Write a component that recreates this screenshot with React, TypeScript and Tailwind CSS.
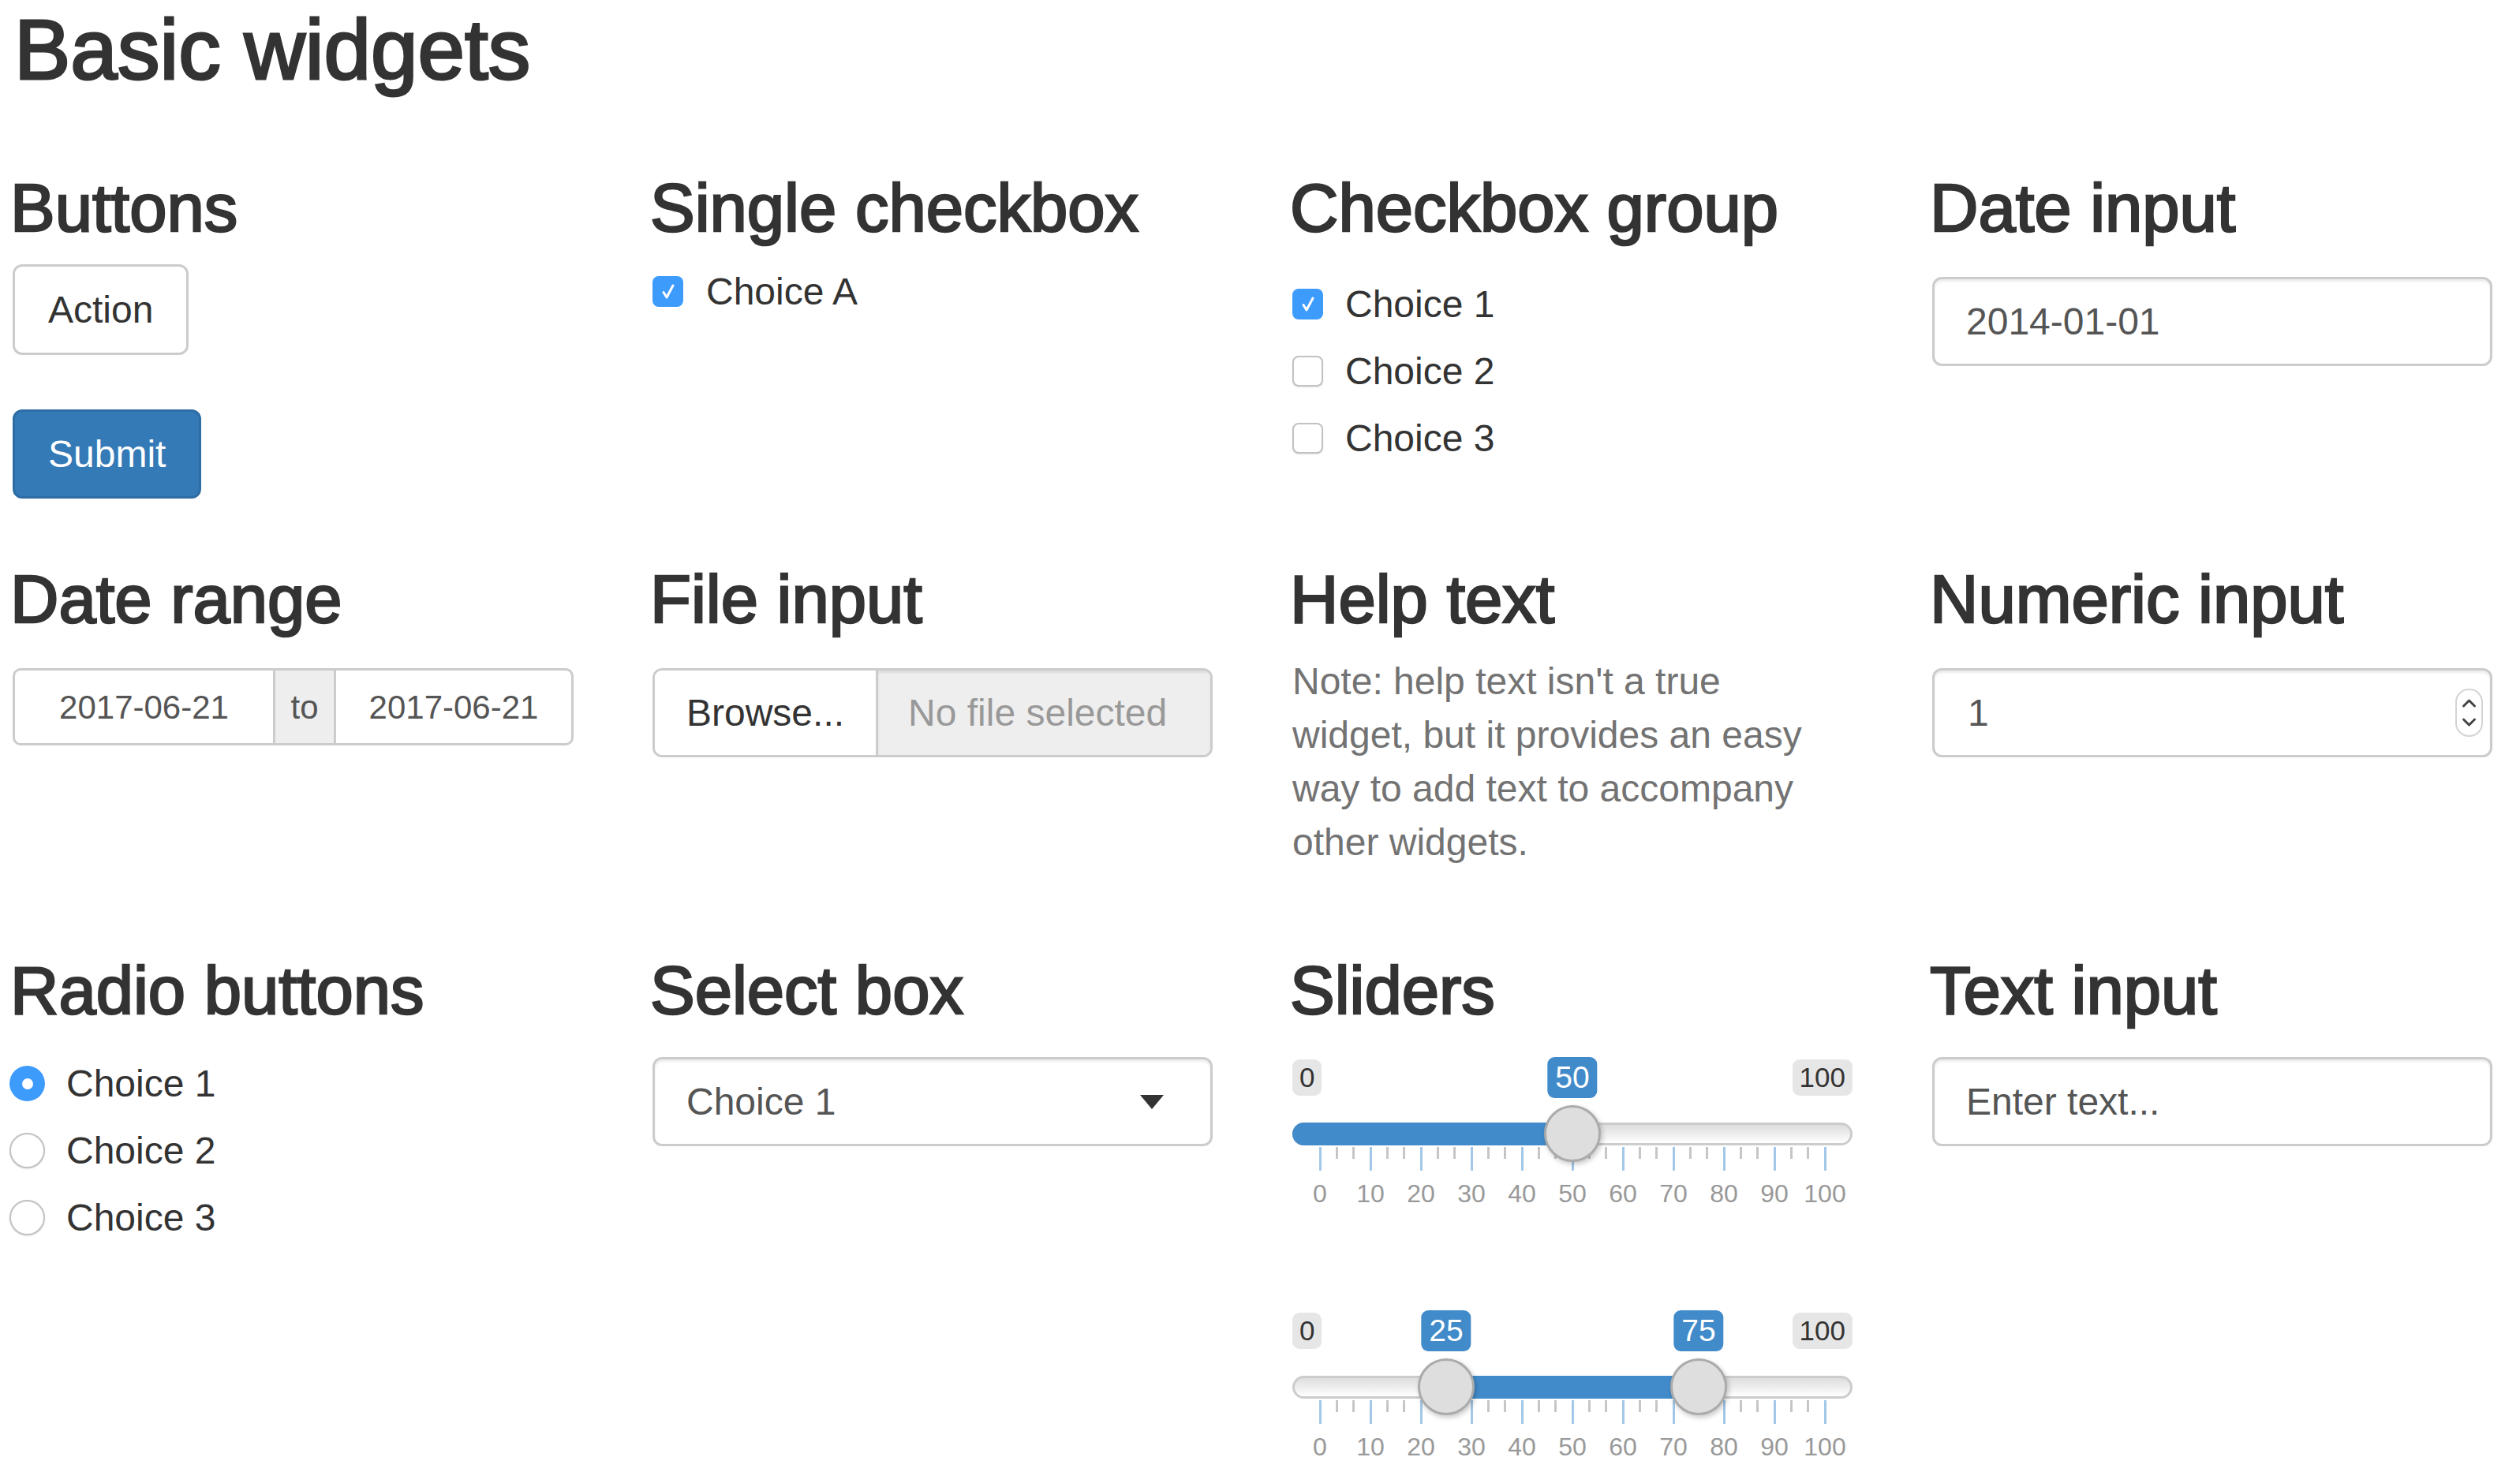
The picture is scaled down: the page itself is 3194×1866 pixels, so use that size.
import React from "react";

const H3 = ({ children }: { children: React.ReactNode }) => (
  <h3 className="-ml-[3px] mb-[12px] text-[85px] leading-[79px] font-normal text-[#333333] whitespace-nowrap [-webkit-text-stroke:2.5px_#333333]">
    {children}
  </h3>
);

const CheckBox = ({ checked }: { checked: boolean }) =>
  checked ? (
    <div className="w-[39px] h-[39px] shrink-0 rounded-[8px] bg-[#3d9bfc] flex items-center justify-center">
      <svg width="26" height="26" viewBox="0 0 26 26">
        <path d="M7 13.5 L11 20 L19 5" fill="none" stroke="#ffffff" strokeWidth="3" strokeLinecap="round" strokeLinejoin="round" />
      </svg>
    </div>
  ) : (
    <div className="w-[39px] h-[39px] shrink-0 rounded-[8px] bg-white border-[2px] border-[#c2c2c2] shadow-[0_1px_2px_rgba(0,0,0,0.12)]" />
  );

const Radio = ({ checked }: { checked: boolean }) =>
  checked ? (
    <div className="w-[45px] h-[45px] shrink-0 rounded-full bg-[#3d9bfc] flex items-center justify-center">
      <div className="w-[14px] h-[14px] rounded-full bg-white" />
    </div>
  ) : (
    <div className="w-[45px] h-[45px] shrink-0 rounded-full bg-white border-[2px] border-[#c2c2c2] shadow-[0_1px_2px_rgba(0,0,0,0.12)]" />
  );

const X = (v: number) => 35 + 6.4 * v;
const majors = [0, 10, 20, 30, 40, 50, 60, 70, 80, 90, 100];
const minors: number[] = [];
for (let k = 0; k < 10; k++) {
  minors.push(k * 10 + 10 / 3, k * 10 + 20 / 3);
}

function Slider({ values, className }: { values: number[]; className: string }) {
  const single = values.length === 1;
  const from = single ? 0 : X(values[0]);
  const to = single ? X(values[0]) : X(values[1]);
  return (
    <div className={`relative w-[710px] h-[190px] ${className}`}>
      <div className="absolute left-0 top-[3px] h-[46px] px-[9px] rounded-[9px] bg-[#e6e6e6] text-[35px] leading-[46px] text-[#333333]">
        0
      </div>
      <div className="absolute right-0 top-[3px] h-[46px] px-[9px] rounded-[9px] bg-[#e6e6e6] text-[35px] leading-[46px] text-[#333333]">
        100
      </div>
      {values.map((v) => (
        <div
          key={v}
          className="absolute top-0 h-[52px] px-[10px] rounded-[9px] bg-[#428bca] text-white text-[39px] leading-[52px] -translate-x-1/2"
          style={{ left: X(v) }}
        >
          {v}
        </div>
      ))}
      <div className="absolute left-0 right-0 top-[83px] h-[29px] rounded-full border-[3px] border-[#cccccc] bg-linear-to-b from-[#dddddd] to-[#ffffff]" />
      <div
        className={`absolute top-[83px] h-[29px] bg-[#428bca] ${single ? "rounded-l-full" : ""}`}
        style={{ left: from, width: to - from }}
      />
      {majors.map((v) => (
        <div key={"M" + v} className="absolute top-[114px] w-[3px] h-[30px] bg-[#a3c7e8]" style={{ left: X(v) - 1.5 }} />
      ))}
      {minors.map((v) => (
        <div key={"m" + v} className="absolute top-[114px] w-[3px] h-[15px] bg-[#c6c6c6]" style={{ left: X(v) - 1.5 }} />
      ))}
      {majors.map((v) => (
        <div
          key={"t" + v}
          className="absolute top-[156px] text-[32px] leading-[34px] text-[#999999] -translate-x-1/2"
          style={{ left: X(v) }}
        >
          {v}
        </div>
      ))}
      {values.map((v) => (
        <div
          key={"h" + v}
          className="absolute top-[61px] w-[72px] h-[72px] rounded-full bg-[#dedede] border-[3px] border-[#ababab] shadow-[2px_3px_6px_rgba(0,0,0,0.22)]"
          style={{ left: X(v) - 36 }}
        />
      ))}
    </div>
  );
}

const inputBox =
  "h-[113px] w-[710px] rounded-[12px] border-[3px] border-[#cccccc] shadow-[inset_0_3px_3px_rgba(0,0,0,0.075)] flex items-center text-[48px] text-[#555555]";

export default function App() {
  return (
    <div className="w-[3194px] h-[1866px] overflow-hidden bg-white text-[#333333] font-['Liberation_Sans',Arial,Helvetica,sans-serif]">
      <h2 className="pl-[18px] pt-[10px] text-[107px] leading-[107px] font-normal whitespace-nowrap [-webkit-text-stroke:3px_#333333]">
        Basic widgets
      </h2>
      <div className="mt-[107px] pl-[16px] grid grid-cols-[811px_811px_811px_710px] grid-rows-[496px_496px_650px]">
        {/* Row 1 */}
        <div>
          <H3>Buttons</H3>
          <div className="mt-[32px] h-[115px] w-fit px-[42px] rounded-[12px] border-[3px] border-[#cccccc] bg-white flex items-center text-[48px] text-[#333333]">
            Action
          </div>
          <div className="mt-[69px] h-[113px] w-fit px-[42px] rounded-[12px] border-[3px] border-[#2e6da4] bg-[#337ab7] flex items-center text-[48px] text-white">
            Submit
          </div>
        </div>
        <div>
          <H3>Single checkbox</H3>
          <div className="mt-[38px] h-[57px] flex items-center gap-[29px] text-[48px]">
            <CheckBox checked />
            <span>Choice A</span>
          </div>
        </div>
        <div>
          <H3>Checkbox group</H3>
          <div className="mt-[54px] flex flex-col gap-[28px]">
            {["Choice 1", "Choice 2", "Choice 3"].map((c, i) => (
              <div key={c} className="h-[57px] flex items-center gap-[28px] text-[48px]">
                <CheckBox checked={i === 0} />
                <span>{c}</span>
              </div>
            ))}
          </div>
        </div>
        <div>
          <H3>Date input</H3>
          <div className={`${inputBox} mt-[48px] pl-[40px]`}>2014-01-01</div>
        </div>

        {/* Row 2 */}
        <div>
          <H3>Date range</H3>
          <div className="mt-[48px] flex h-[98px] w-[711px] rounded-[10px] border-[3px] border-[#cccccc] overflow-hidden text-[42px] text-[#555555]">
            <div className="w-[327px] flex items-center justify-center">2017-06-21</div>
            <div className="w-[80px] flex items-center justify-center bg-[#eeeeee] border-x-[3px] border-[#cccccc]">to</div>
            <div className="flex-1 flex items-center justify-center">2017-06-21</div>
          </div>
        </div>
        <div>
          <H3>File input</H3>
          <div className="mt-[48px] flex h-[113px] w-[710px] rounded-[12px] border-[3px] border-[#cccccc] overflow-hidden text-[48px]">
            <div className="flex items-center px-[40px] bg-white text-[#333333] border-r-[3px] border-[#cccccc]">Browse...</div>
            <div className="flex-1 flex items-center pl-[38px] bg-[#eeeeee] text-[#999999] shadow-[inset_0_3px_3px_rgba(0,0,0,0.075)]">
              No file selected
            </div>
          </div>
        </div>
        <div>
          <H3>Help text</H3>
          <p className="mt-[31px] text-[48px] leading-[68px] text-[#737373] whitespace-nowrap">
            Note: help text isn't a true
            <br />
            widget, but it provides an easy
            <br />
            way to add text to accompany
            <br />
            other widgets.
          </p>
        </div>
        <div>
          <H3>Numeric input</H3>
          <div className={`${inputBox} mt-[48px] pl-[42px] pr-[7px] justify-between`}>
            <span>1</span>
            <svg width="38" height="64" viewBox="0 0 38 64">
              <rect x="2" y="2" width="33" height="59" rx="16" fill="#ffffff" stroke="#d4d4d4" strokeWidth="2" />
              <path d="M11.5 23 L18.5 16 L25.5 23" fill="none" stroke="#444444" strokeWidth="3" strokeLinecap="round" strokeLinejoin="round" />
              <path d="M11.5 40 L18.5 47 L25.5 40" fill="none" stroke="#444444" strokeWidth="3" strokeLinecap="round" strokeLinejoin="round" />
            </svg>
          </div>
        </div>

        {/* Row 3 */}
        <div>
          <H3>Radio buttons</H3>
          <div className="mt-[50px] -ml-[4px] flex flex-col gap-[28px]">
            {["Choice 1", "Choice 2", "Choice 3"].map((c, i) => (
              <div key={c} className="h-[57px] flex items-center gap-[27px] text-[48px]">
                <Radio checked={i === 0} />
                <span>{c}</span>
              </div>
            ))}
          </div>
        </div>
        <div>
          <H3>Select box</H3>
          <div className={`${inputBox} mt-[45px] pl-[40px] pr-[59px] justify-between text-[#333333]`}>
            <span>Choice 1</span>
            <svg width="30" height="18" viewBox="0 0 30 18">
              <path d="M0 0 H30 L15 18 Z" fill="#333333" />
            </svg>
          </div>
        </div>
        <div>
          <H3>Sliders</H3>
          <Slider values={[50]} className="mt-[45px]" />
          <Slider values={[25, 75]} className="mt-[131px]" />
        </div>
        <div>
          <H3>Text input</H3>
          <div className={`${inputBox} mt-[45px] pl-[40px]`}>Enter text...</div>
        </div>
      </div>
    </div>
  );
}
